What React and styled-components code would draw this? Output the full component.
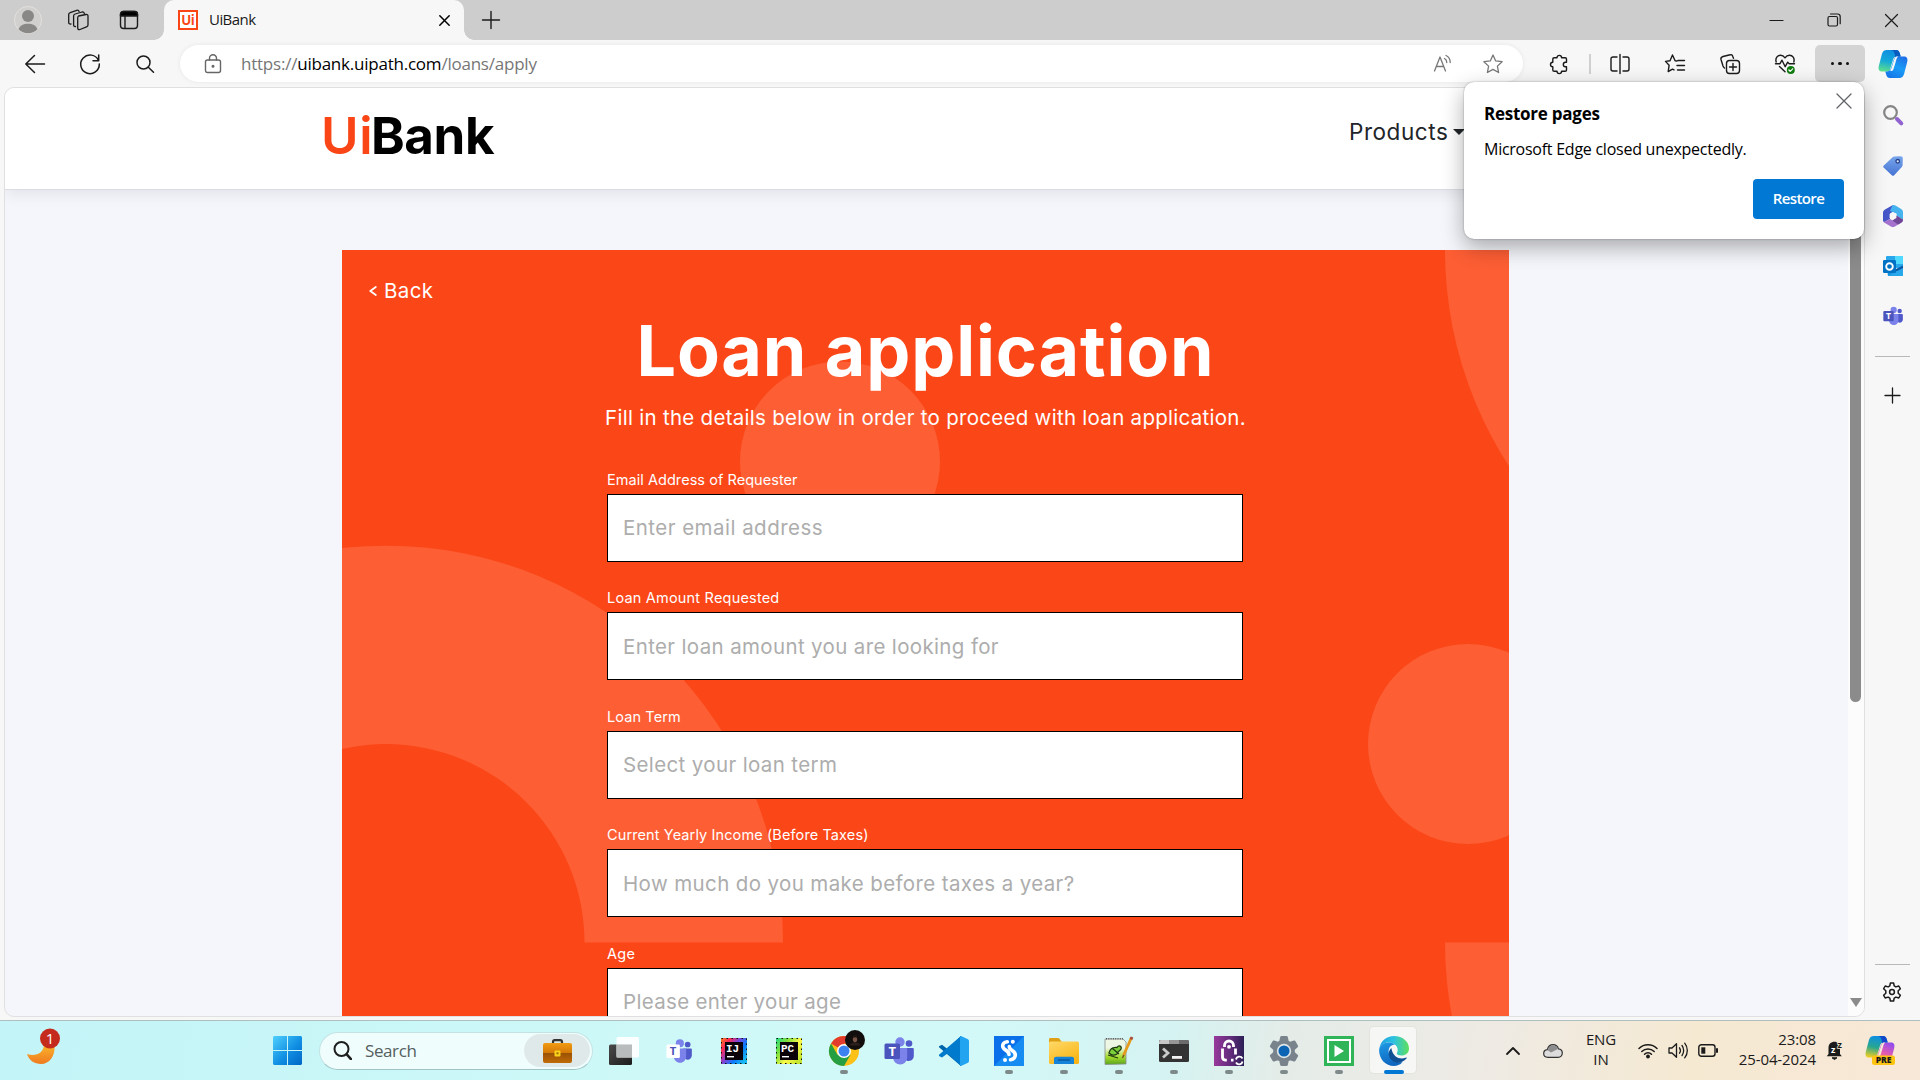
import React from 'react';
import styled, { createGlobalStyle } from 'styled-components';

const ui = '"Open Sans", "Noto Sans", sans-serif';
const brand = 'Inter, Lato, sans-serif';

const GlobalStyle = createGlobalStyle`
  *, *::before, *::after { box-sizing: border-box; }
  body { margin: 0; background: #f7f7f7; overflow: hidden; }
  button, input { font: inherit; margin: 0; }
`;

const Screen = styled.div`
  width: 1920px;
  height: 1080px;
  display: flex;
  flex-direction: column;
  font-family: ${ui};
  color: #1a1a1a;
  overflow: hidden;
`;

/* ---------- tab strip ---------- */
const TabStrip = styled.div`
  height: 40px;
  flex: none;
  display: flex;
  align-items: center;
  background: #cdcdcd;
`;
const Cell = styled.div`
  width: ${p => p.$w || 55}px;
  height: 100%;
  flex: none;
  margin-left: ${p => p.$ml || 0}px;
  display: flex;
  align-items: center;
  justify-content: center;
  svg { display: block; overflow: visible; }
`;
const Tab = styled.div`
  width: 300px;
  height: 40px;
  margin-left: 5px;
  padding: 0 7px 0 14px;
  display: flex;
  align-items: center;
  background: #f7f7f7;
  border-radius: 10px 10px 0 0;
  position: relative;
  &::before, &::after {
    content: '';
    position: absolute;
    bottom: 0;
    width: 10px;
    height: 10px;
  }
  &::before { left: -10px; background: radial-gradient(circle at 0 0, #cdcdcd 9.5px, #f7f7f7 10px); }
  &::after { right: -10px; background: radial-gradient(circle at 100% 0, #cdcdcd 9.5px, #f7f7f7 10px); }
`;
const Favicon = styled.div`
  width: 20px;
  height: 20px;
  border: 2px solid #fa4616;
  background: #fff;
  color: #fa4616;
  font: 700 13px/16px ${brand};
  text-align: center;
`;
const TabTitle = styled.span`
  flex: 1;
  margin: -2px 0 0 11px;
  font-size: 15px;
  letter-spacing: -0.55px;
`;
const Spacer = styled.div`flex: 1;`;

/* ---------- browser body ---------- */
const Body = styled.div`
  height: 980px;
  flex: none;
  display: grid;
  grid-template-columns: 1865px 55px;
  background: #f7f7f7;
  position: relative;
`;
const Main = styled.div`
  display: flex;
  flex-direction: column;
  min-width: 0;
`;
const Toolbar = styled.div`
  height: 47px;
  flex: none;
  padding: 5px 0 5px 7px;
  display: flex;
`;
const AddressBar = styled.div`
  width: 1343px;
  flex: none;
  margin-left: 8px;
  padding: 0 5px 0 8px;
  display: flex;
  align-items: center;
  border-radius: 19px;
  background: #fff;
  box-shadow: 0 0 5px rgba(0, 0, 0, 0.07);
`;
const Url = styled.div`
  flex: 1;
  margin-left: 4px;
  font-size: 17px;
  letter-spacing: -0.225px;
  color: #767676;
  white-space: nowrap;
  b { font-weight: 400; color: #000; }
`;
const Divider = styled.div`
  width: 2px;
  height: 20px;
  align-self: center;
  margin: 0 1px 0 5px;
  background: #d0d0d0;
`;
const MenuButton = styled.div`
  width: 50px;
  margin-left: 3px;
  display: flex;
  align-items: center;
  justify-content: center;
  gap: 4px;
  border-radius: 5px;
  background: #d4d4d4;
  i { width: 3.4px; height: 3.4px; border-radius: 50%; background: #111; }
`;

const Viewport = styled.div`
  height: 930px;
  flex: none;
  margin: 0 0 0 4px;
  display: flex;
  border: 1px solid #e0e0e0;
  border-radius: 10px;
  overflow: hidden;
  background: #f5f6fb;
`;
const Page = styled.div`
  width: 1843px;
  display: flex;
  flex-direction: column;
`;
const ScrollTrack = styled.div`
  width: 16px;
  padding-left: 2px;
  display: flex;
  flex-direction: column;
  align-items: flex-start;
  background: #fcfcfc;
`;
const Thumb = styled.div`
  width: 11px;
  height: 598px;
  margin-top: 16px;
  border-radius: 6px;
  background: #8b8b8b;
`;
const Arrow = styled.div`
  margin: 296px 0 0 -0.5px;
  border: 6px solid transparent;
  border-top: 9px solid #8b8b8b;
  border-bottom: 0;
`;

/* ---------- bank page ---------- */
const Header = styled.header`
  height: 102px;
  flex: none;
  display: flex;
  background: #fff;
  border-bottom: 1px solid #dcdde2;
  box-shadow: 0 5px 14px rgba(0, 0, 40, 0.07);
  z-index: 1;
`;
const Logo = styled.div`
  margin: 18px 0 0 316px;
  width: 200px;
  display: flex;
  font: 700 51px/60px ${brand};
  letter-spacing: -0.4px;
  color: #000;
`;
const LogoAccent = styled.span`
  width: 50px;
  color: #fa4616;
  font-weight: 600;
  letter-spacing: 0.8px;
`;
const NavItem = styled.div`
  margin: 28px 0 0 828px;
  display: flex;
  align-items: center;
  height: 32px;
  font: 400 22.5px/32px ${brand};
  letter-spacing: 0.55px;
  color: #212529;
  &::after {
    content: '';
    margin-left: 5px;
    border: 6px solid transparent;
    border-top-color: #212529;
    border-bottom: 0;
  }
`;
const Card = styled.section`
  width: 1167px;
  flex: 1;
  min-height: 0;
  margin: 60px 0 0 337px;
  padding: 26px 265px 0;
  background: #fb4617;
  color: #fff;
  font-family: ${brand};
  position: relative;
  overflow: hidden;
`;
const CardArt = styled.svg`
  position: absolute;
  left: 0;
  top: 0;
`;
const CardContent = styled.div`
  position: relative;
  display: flex;
  flex-direction: column;
`;
const BackLink = styled.a`
  height: 30px;
  margin-left: -238px;
  display: flex;
  align-items: center;
  gap: 7px;
  font-size: 20.5px;
  line-height: 30px;
  letter-spacing: 0.4px;
`;
const Title = styled.h1`
  margin: 3px -20px 0 -20px;
  font-size: 70px;
  line-height: 84px;
  font-weight: 700;
  letter-spacing: 0.85px;
  text-align: center;
  white-space: nowrap;
`;
const Lead = styled.p`
  margin: 10px -10px 36px;
  font-size: 20.5px;
  line-height: 30px;
  letter-spacing: 0.28px;
  text-align: center;
  white-space: nowrap;
`;
const Form = styled.form`
  width: 636px;
  display: flex;
  flex-direction: column;
  gap: 25.7px;
`;
const Field = styled.div`
  display: flex;
  flex-direction: column;
  gap: 2.8px;
`;
const Label = styled.label`
  font-size: 14.5px;
  line-height: 22px;
  letter-spacing: ${p => p.$ls}px;
`;
const Input = styled.input`
  width: 636px;
  height: 68px;
  padding: 0 15px;
  border: 1px solid #000;
  border-radius: 0;
  background: #fff;
  font: 400 20.5px/30px ${brand};
  letter-spacing: ${p => p.$ls}px;
  outline: none;
  &::placeholder { color: #adadad; opacity: 1; }
`;

/* ---------- restore popup ---------- */
const Popup = styled.div`
  position: absolute;
  left: 1464px;
  top: 42px;
  width: 400px;
  height: 157px;
  padding: 20px 20px 0;
  border-radius: 10px;
  background: #fff;
  box-shadow: 0 0 2px rgba(0, 0, 0, 0.35), 0 8px 22px rgba(0, 0, 0, 0.32);
  z-index: 3;
  color: #000;
`;
const PopupHead = styled.div`
  display: flex;
  justify-content: space-between;
  height: 24px;
  font: 700 17px/24px ${ui};
  letter-spacing: -0.25px;
  svg { margin: -9px -8px 0 0; overflow: visible; }
`;
const PopupText = styled.p`
  margin: 12px 0 19px;
  font-size: 16px;
  line-height: 22px;
  letter-spacing: -0.253px;
`;
const RestoreButton = styled.button`
  display: block;
  width: 91px;
  height: 40px;
  margin-left: auto;
  padding: 0 0 2px;
  border: 0;
  border-radius: 4px;
  background: #0078d4;
  color: #fff;
  font: 600 15px/38px ${ui};
  letter-spacing: -0.6px;
`;

/* ---------- sidebar ---------- */
const Sidebar = styled.aside`
  display: flex;
  flex-direction: column;
  align-items: center;
`;
const SideCell = styled.div`
  height: ${p => p.$h || 50}px;
  flex: none;
  display: flex;
  align-items: center;
  justify-content: center;
  svg { display: block; overflow: visible; }
`;
const SideRule = styled.div`
  width: 35px;
  height: 1px;
  flex: none;
  background: #b8b8b8;
`;

/* ---------- taskbar ---------- */
const Taskbar = styled.footer`
  height: 60px;
  flex: none;
  display: flex;
  align-items: center;
  border-top: 1px solid #aebfc0;
  background: linear-gradient(100deg, #c3f4f7 0%, #cdf8f8 30%, #d2f9f8 50%, #d5f3f2 61%, #e5ece8 67%, #eeeae4 77%, #f5e9d2 88%, #f8e8d8 100%);
`;
const Weather = styled.div`
  width: 260px;
  height: 59px;
  padding: 8px 0 0 27px;
  flex: none;
  svg { display: block; overflow: visible; }
`;
const SearchBox = styled.div`
  width: 274px;
  height: 38px;
  margin: 0 3px 0 4px;
  padding: 0 2px 0 13px;
  flex: none;
  display: flex;
  align-items: center;
  border-radius: 19px;
  background: #effdfd;
  border: 1px solid #c3e2e3;
  border-bottom-color: #9fc4c6;
  font-size: 17px;
  letter-spacing: -0.4px;
  color: #555f60;
  span { flex: 1; margin-left: 13px; }
`;
const Highlight = styled.div`
  width: 66px;
  height: 33px;
  display: flex;
  align-items: center;
  justify-content: center;
  border-radius: 17px;
  background: #dfe9e9;
`;
const App55 = styled.div`
  width: 55px;
  height: 59px;
  flex: none;
  display: flex;
  align-items: center;
  justify-content: center;
  position: relative;
  svg { display: block; overflow: visible; position: relative; }
  &::before {
    content: '';
    display: ${p => (p.$active ? 'block' : 'none')};
    position: absolute;
    left: 3px;
    top: 5px;
    width: 48px;
    height: 48px;
    border-radius: 5px;
    background: rgba(255, 255, 255, 0.6);
    border: 1px solid rgba(225, 225, 220, 0.9);
  }
  &::after {
    content: '';
    display: ${p => (p.$open ? 'block' : 'none')};
    position: absolute;
    left: ${p => (p.$active ? 17.5 : 23.5)}px;
    top: 49px;
    width: ${p => (p.$active ? 20 : 8)}px;
    height: 4px;
    border-radius: 2px;
    background: ${p => (p.$active ? '#0078d4' : '#7d8a89')};
  }
`;
const Tray = styled.div`
  flex: 1;
  height: 59px;
  margin-left: 70px;
  display: flex;
  align-items: center;
  color: #1b1b1b;
`;
const TrayText = styled.div`
  width: ${p => p.$w}px;
  flex: none;
  text-align: ${p => p.$align};
  font-size: 15px;
  line-height: 20px;
  letter-spacing: -0.1px;
  white-space: nowrap;
  margin-top: -3px;
`;

/* ---------- line icon wrapper ---------- */
const Line = ({ w = 20, h = w, c = '#1b1b1b', s = 1.4, children }) => (
  <svg width={w} height={h} viewBox={`0 0 ${w} ${h}`} fill="none" stroke={c} strokeWidth={s} strokeLinecap="round" strokeLinejoin="round">{children}</svg>
);
const GEAR = 'M8.4 1h3.2l.6 2.9 1.7 1 2.9-.9 1.6 2.8-2.2 2v2.4l2.2 2-1.6 2.8-2.9-.9-1.7 1-.6 2.9H8.4l-.6-2.9-1.7-1-2.9.9-1.6-2.8 2.2-2V8.8l-2.2-2L3.2 4l2.9.9 1.7-1z';
const STAR = 'M10 1l2.7 5.9 6.4.8-4.7 4.4 1.2 6.4L10 15.4l-5.6 3.1 1.2-6.4L.9 7.7l6.4-.8z';

const Copilot = ({ w = 30, pre }) => (
  <svg width={w} height={w} viewBox="0 0 30 30">
    <defs>
      <linearGradient id={pre ? 'pa' : 'ca'} x1="0.4" y1="0" x2="0.2" y2="1">
        <stop offset="0" stopColor="#0f8fe0" /><stop offset="0.5" stopColor={pre ? '#27a690' : '#15a9d8'} /><stop offset="1" stopColor={pre ? '#f7cf1c' : '#5fe08a'} />
      </linearGradient>
      <linearGradient id={pre ? 'pb' : 'cb'} x1="0.8" y1="0" x2="0.3" y2="1">
        <stop offset="0" stopColor={pre ? '#8f4df0' : '#1f6fe6'} /><stop offset="0.5" stopColor={pre ? '#e45bb0' : '#1a9cf7'} /><stop offset="1" stopColor={pre ? '#ff8a4c' : '#1677e8'} />
      </linearGradient>
    </defs>
    <path d="M9 0h9c2.400 0 3.300 1.400 4 4l.7 2.500H19c-2.500 0-3.300 1-4 3.300l-2.600 8.500c-.7 2.300-1.600 3.200-4 3.200H4.500C1 21.500 0 19.500.8 16l3-11.500C4.700 1.300 6 0 9 0z" fill={`url(#${pre ? 'pa' : 'ca'})`} />
    <path d="M21 28h-9c-2.400 0-3.300-1.400-4-4l-.7-2.500h1.100c2.600 0 3.900-1.200 4.700-3.800L15.700 9.800c.6-2 1.300-3.300 3.800-3.300h6c3.500 0 4.500 2 3.700 5.500l-3 11.500C25.300 26.700 24 28 21 28z" fill={`url(#${pre ? 'pb' : 'cb'})`} />
    <path d="M13 0h5c2.400 0 3.300 1.400 4 4l.7 2.500H19l-1.800.4C16.800 3 16 .5 13 0z" fill={pre ? '#1147c8' : '#0b5ac0'} />
    <path d="M12 20.500c.8-.7 1.300-1.700 1.700-3L16.200 9.600c.5-1.600 1.100-2.500 2.300-3h1.800c-1 .6-1.500 1.500-1.900 2.900l-2.700 8.900c-.4 1.400-1 2.100-2 2.600z" fill={pre ? '#f7ead8' : '#f7f7f7'} />
    {pre && <rect x="7" y="19.500" width="23" height="9.500" rx="2.500" fill="#fdc512" />}
    {pre && <text x="18.600" y="27.300" textAnchor="middle" fontFamily="Open Sans, sans-serif" fontWeight="800" fontSize="8.500" fill="#1b1b1b">PRE</text>}
  </svg>
);

const Teams = ({ w = 30, light }) => (
  <svg width={w} height={w} viewBox="0 0 30 30">
    <circle cx="16" cy="6" r="4.700" fill="#7b83eb" />
    <circle cx="25" cy="7.500" r="3.300" fill="#5059c9" />
    <path d="M20 12h8.500c.8 0 1.300.5 1.300 1.300v6.500c0 3.200-2.300 5.200-5 5.200s-4.800-2-4.800-5z" fill="#5059c9" />
    <path d="M9 12h13c.7 0 1.200.5 1.200 1.200V21c0 4.500-3.200 7.500-7 7.500S9 25.500 9 21z" fill="#7b83eb" />
    <rect x="0.500" y="7.500" width="15.500" height="15.500" rx="1.500" fill={light ? '#fff' : '#4b53bc'} />
    <text x="8.200" y="19.800" textAnchor="middle" fontFamily="Open Sans, sans-serif" fontWeight="700" fontSize="13" fill={light ? '#4b53bc' : '#fff'}>T</text>
  </svg>
);

const JetBrains = ({ id, letters, stops }) => (
  <svg width="26" height="26" viewBox="0 0 26 26">
    <defs>
      <linearGradient id={id} x1="0" y1="0" x2="1" y2="0.700">
        {stops.map((c, i) => <stop key={c} offset={i / (stops.length - 1)} stopColor={c} />)}
      </linearGradient>
    </defs>
    <rect width="26" height="26" fill={`url(#${id})`} />
    <rect x="0.500" y="0.500" width="25" height="25" fill="none" stroke="#111" strokeDasharray="1.500 3.500" />
    <rect x="4" y="4" width="18" height="18" fill="#0a0208" />
    <text x="5" y="13.500" fontFamily="Liberation Mono, monospace" fontWeight="700" fontSize="11" fill="#fff">{letters}</text>
    <rect x="6" y="18" width="7" height="1.400" fill="#fff" />
  </svg>
);

const fields = [
  ['Email Address of Requester', 0.05, 'Enter email address', 0.47],
  ['Loan Amount Requested', 0.2, 'Enter loan amount you are looking for', 0.355],
  ['Loan Term', 0.1, 'Select your loan term', 0.37],
  ['Current Yearly Income (Before Taxes)', 0.11, 'How much do you make before taxes a year?', 0.38],
  ['Age', 0.3, 'Please enter your age', 0.33],
];

function Tabs() {
  return (
    <TabStrip>
      <Cell $w={56}>
        <svg width="28" height="28" viewBox="0 0 28 28">
          <circle cx="14" cy="14" r="13.500" fill="#d2d0ce" stroke="#e2e0dd" />
          <circle cx="14" cy="10" r="6" fill="#8a8886" />
          <path d="M4.500 23.300C6 19.500 9.500 17.800 14 17.800s8 1.700 9.500 5.500C21 26 17.500 27.300 14 27.300S7 26 4.500 23.300z" fill="#8a8886" />
        </svg>
      </Cell>
      <Cell $w={43}>
        <Line w={22} s={1.3}>
          <path d="M11.500 7l7.500-1.500c1.200-.2 2 .4 2 1.500v9c0 1-.5 1.600-1.500 1.900L13 20.500c-1.300.5-2.300-.3-2.300-1.600V9c0-1.100.2-1.700.8-2z" />
          <path d="M8.500 17.500c-1.200.2-1.900-.4-1.900-1.500V7c0-1.100.5-1.700 1.500-2l7-2c1.200-.3 2 .4 2.200 1.500" />
          <path d="M4 15c-1.300.3-2.300-.3-2.300-1.600V5.600c0-1.100.5-1.700 1.500-2l6.500-2.300c1.200-.4 2 .1 2.400 1.200" />
        </Line>
      </Cell>
      <Cell $w={60}>
        <Line w={20}><rect x="1.500" y="1.500" width="17" height="17" rx="3" /><path d="M1.500 6V4.500a3 3 0 0 1 3-3h11a3 3 0 0 1 3 3V6z" fill="#000" /><path d="M6 6v12" /></Line>
      </Cell>
      <Tab>
        <Favicon>Ui</Favicon>
        <TabTitle>UiBank</TabTitle>
        <Cell $w={26}><Line w={11} s={1.5} c="#000"><path d="M.8.8l9.400 9.400M10.200.8L.8 10.200" /></Line></Cell>
      </Tab>
      <Cell $w={54}><Line w={18} s={1.4}><path d="M9 .5v17M.5 9h17" /></Line></Cell>
      <Spacer />
      <Cell $w={57}><Line w={13} s={1.2}><path d="M0 6.500h13" /></Line></Cell>
      <Cell $w={57}><Line w={14} s={1.2}><rect x="1" y="3.500" width="9.500" height="9.500" rx="1.500" /><path d="M3.500 1h7c1.700 0 2.700 1 2.700 2.700v7" /></Line></Cell>
      <Cell $w={58}><Line w={13} s={1.2}><path d="M.5.5l12 12M12.500.5l-12 12" /></Line></Cell>
    </TabStrip>
  );
}

function Navigation() {
  return (
    <Toolbar>
      <Cell><Line w={20} s={1.500}><path d="M19.500 10H.8M9.500 1.500L.8 10l8.700 8.500" /></Line></Cell>
      <Cell><Line w={20} s={1.500}><path d="M18.500 6.500A9.300 9.300 0 1 0 19.300 10M18.700 1v5.700H13" /></Line></Cell>
      <Cell><Line w={18} s={1.500}><circle cx="7.500" cy="7.500" r="6.500" /><path d="M12.300 12.300l5.200 5" /></Line></Cell>
      <AddressBar>
        <Cell $w={49}><Line w={18} h={20} c="#666" s={1.400}><rect x="1.500" y="6" width="15" height="12.500" rx="2" /><path d="M5.500 6V4.300a3.500 3.500 0 0 1 7 0V6" /><circle cx="9" cy="12.300" r="0.800" fill="#666" /></Line></Cell>
        <Url>https://<b>uibank.uipath.com</b>/loans/apply</Url>
        <Cell $w={50}><Line w={20} c="#777" s={1.300}><path d="M1.500 17L7 3l5.500 14M3.500 12.500h7M11.500 4.500c1.500.8 2.300 2.200 2.300 4M13 1.500c2.700 1.200 4.200 3.800 4.200 7" /></Line></Cell>
        <Cell $w={50}><Line w={20} c="#777" s={1.300}><path d={STAR} /></Line></Cell>
      </AddressBar>
      <Cell $w={50} $ml={11}>
        <Line w={20}><path d="M8 3.700a2.300 2.300 0 0 1 4.600 0h3.500c1 0 1.400.5 1.400 1.400v3.200h-1a2.200 2.200 0 0 0 0 4.400h1v3.200c0 .9-.5 1.400-1.400 1.400h-3.500a2.300 2.300 0 0 1-4.600 0H5.200c-.9 0-1.400-.5-1.400-1.400v-3.100a2.300 2.300 0 0 1 0-4.600V5.100c0-.9.500-1.400 1.400-1.400z" /></Line>
      </Cell>
      <Divider />
      <Cell><Line w={20}><path d="M7 3H3C1.700 3 1 3.700 1 5v10c0 1.300.7 2 2 2h4M13 3h4c1.300 0 2 .7 2 2v10c0 1.300-.7 2-2 2h-4M10 .5v19" /></Line></Cell>
      <Cell><Line w={20}><path d="M12 7l-1.900-.3L7.500 1 5 6.700l-4.500.7 3.600 3.900-.9 6.300 4.300-2.500 1.500.8M13 6.500h6.500M12 11.500h7.500M12.500 16h7" /></Line></Cell>
      <Cell><Line w={20}><rect x="6.500" y="6.500" width="13" height="13" rx="3" /><path d="M13 9.500v7M9.500 13h7M13.500 4.300l-.8-2C12.300 1 11.500.4 10.200.8L3 2.500C1.500 3 .6 4 1 5.500l2 6.500c.3.800.8 1.500 1.500 2" /></Line></Cell>
      <Cell>
        <Line w={20}><path d="M1.200 8C0 4 2.500 1.200 5.500 1.200c2 0 3.400 1 4.500 2.600 1.100-1.600 2.500-2.600 4.500-2.600C17.500 1.200 20 4 18.800 8M.5 9.700H5l2-3.500 3.200 6.500 2.500-4.500 1.500 1.500h5.300M4.500 12.500l5.500 5.300" /><circle cx="15.800" cy="16" r="4" fill="#107c10" stroke="none" /><path d="M13.900 16l1.300 1.400 2.500-2.600" stroke="#fff" strokeWidth="1.200" /></Line>
      </Cell>
      <MenuButton><i /><i /><i /></MenuButton>
    </Toolbar>
  );
}

function BankPage() {
  return (
    <Page>
      <Header>
        <Logo><LogoAccent>Ui</LogoAccent>Bank</Logo>
        <NavItem>Products</NavItem>
      </Header>
      <Card>
        <CardArt width="1167" height="770" fill="#fd5e34">
          <circle cx="498" cy="211.500" r="100" />
          <circle cx="1126" cy="494" r="100" />
          <path d="M-353 692.500a397 397 0 0 1 794 0H242.500a198.500 198.500 0 0 0-397 0z" />
          <path d="M1103 0a397 397 0 0 0 794 0z" />
          <path d="M1103 692.500a397 397 0 0 0 794 0z" />
        </CardArt>
        <CardContent>
          <BackLink>
            <Line w={8} h={10} c="#fff" s={1.800}><path d="M6.800 1L1.300 5l5.500 4" /></Line>
            Back
          </BackLink>
          <Title>Loan application</Title>
          <Lead>Fill in the details below in order to proceed with loan application.</Lead>
          <Form>
            {fields.map(([label, ls, placeholder, pls]) => (
              <Field key={label}>
                <Label $ls={ls}>{label}</Label>
                <Input placeholder={placeholder} $ls={pls} readOnly />
              </Field>
            ))}
          </Form>
        </CardContent>
      </Card>
    </Page>
  );
}

function SideIcons() {
  return (
    <Sidebar>
      <SideCell $h={49}><Copilot w={30} /></SideCell>
      <SideCell $h={52}>
        <svg width="20" height="20" viewBox="0 0 20 20" fill="none"><circle cx="7.500" cy="7.500" r="6.300" stroke="#858585" strokeWidth="2.200" /><path d="M14 14l4.300 4.300" stroke="#9263d0" strokeWidth="4" strokeLinecap="round" /></svg>
      </SideCell>
      <SideCell>
        <svg width="20" height="20" viewBox="0 0 20 20"><defs><linearGradient id="tag" x1="0.500" y1="0" x2="0.500" y2="1"><stop offset="0" stopColor="#78a6ec" /><stop offset="1" stopColor="#4673d2" /></linearGradient></defs><path d="M11.500.5l6-.2c1.500 0 2.300.8 2.300 2.300l-.2 6.400c0 .8-.3 1.300-.8 1.900l-7.600 8.300c-.8.800-1.600.8-2.400 0L.8 11.800C0 11 0 10.200.8 9.400l8.500-8c.6-.6 1.300-.9 2.200-.9z" fill="url(#tag)" /><circle cx="14.700" cy="5.300" r="1.800" fill="#d7e6fb" stroke="#27408b" strokeWidth="1.300" /></svg>
      </SideCell>
      <SideCell>
        <svg width="20" height="22" viewBox="0 0 20 22"><path d="M9.500.3L2 4.500C.7 5.300 0 6.300 0 8v7c0 1 .3 1.800.8 2.300L7 14V8.500l5-3V1.500z" fill="#4456c8" /><path d="M9.500.3c1-.5 2-.3 3 .3l5.700 3.500C19.400 5 20 6 20 7.500v7l-6.500-3.700V8.500L7 6z" fill="#45b4ee" /><path d="M20 14.500c0 1.500-.6 2.500-1.800 3.200l-6.300 3.700c-1.300.8-2.600.8-4 0l-6-3.500c-.5-.3-.9-.6-1.100-1L7 14l3 1.500 3.500-2z" fill="#a471cf" /><path d="M13.500 10.500L20 14.500c0 1.500-.6 2.500-1.800 3.200l-3.200 1.900L9.500 15.500z" fill="#6f4796" /><path d="M10 7.200l3.400 2v3.900L10 15l-3.400-1.900V9.200z" fill="#f7f7f7" /></svg>
      </SideCell>
      <SideCell>
        <svg width="20" height="20" viewBox="0 0 20 20"><rect x="3" width="17" height="12" rx="1" fill="#28a8ea" /><rect x="12" width="8" height="8" fill="#50d9ff" /><path d="M5 10l15 10H6c-.8 0-1.300-.5-1.300-1.300z" fill="#1490df" /><path d="M20 9.500v10.200L11 14z" fill="#0a5aa8" /><path d="M5 19.800L20 12v8z" fill="#28a8ea" /><rect y="4" width="13" height="13" rx="1.300" fill="#0072c6" /><circle cx="6.500" cy="10.500" r="3.300" fill="none" stroke="#fff" strokeWidth="1.900" /></svg>
      </SideCell>
      <SideCell><Teams w={20} /></SideCell>
      <SideCell $h={15} />
      <SideRule />
      <SideCell $h={77}><Line w={15} s={1.300}><path d="M7.500 0v15M0 7.500h15" /></Line></SideCell>
      <Spacer />
      <SideRule />
      <SideCell $h={55}><Line w={21} s={1.500}><path d={GEAR} /><circle cx="10" cy="10" r="2.400" /></Line></SideCell>
    </Sidebar>
  );
}

function WindowsTaskbar() {
  return (
    <Taskbar>
      <Weather>
        <svg width="34" height="36" viewBox="0 0 34 36">
          <defs><linearGradient id="moon" x1="0" y1="0" x2="0" y2="1"><stop offset="0" stopColor="#fbb72c" /><stop offset="1" stopColor="#ee7a20" /></linearGradient></defs>
          <path d="M27.500 17c.8 10-5 18-13.500 18C7.500 35 2 31.500 0 25c8 3 17-.5 17-10z" fill="url(#moon)" />
          <circle cx="23" cy="9.500" r="10" fill="#c42b1c" />
          <text x="23" y="15" textAnchor="middle" fontFamily="Open Sans, sans-serif" fontSize="15" fill="#fff">1</text>
        </svg>
      </Weather>
      <App55>
        <svg width="29" height="29" viewBox="0 0 29 29"><defs><linearGradient id="win" x1="0" y1="0" x2="1" y2="1"><stop offset="0" stopColor="#4fd0fd" /><stop offset="0.550" stopColor="#118fe3" /><stop offset="1" stopColor="#0067c6" /></linearGradient></defs><path d="M1 0h13v14H0V1zM15 0h13l1 1v13H15zM0 15h14v14H1l-1-1zM15 15h14v13l-1 1H15z" fill="url(#win)" /></svg>
      </App55>
      <SearchBox>
        <Line w={19} s={2} c="#1f1f1f"><circle cx="8.500" cy="8" r="7" /><path d="M13.500 13.200l4.500 5" strokeWidth="2.500" /></Line>
        <span>Search</span>
        <Highlight>
          <svg width="29" height="24" viewBox="0 0 29 24"><defs><linearGradient id="case" x1="0" y1="0" x2="0" y2="1"><stop offset="0" stopColor="#f29a12" /><stop offset="0.500" stopColor="#d47a08" /><stop offset="0.520" stopColor="#9a5204" /><stop offset="1" stopColor="#c06c08" /></linearGradient></defs><path d="M10 5V3c0-1.200.6-1.800 1.800-1.800h5.400c1.200 0 1.800.6 1.800 1.800v2" fill="none" stroke="#333" strokeWidth="2.200" /><rect y="4" width="29" height="20" rx="2" fill="url(#case)" /><rect x="11.500" y="11.500" width="6" height="6" rx="1" fill="#f9d21c" /><rect x="13.500" y="13.300" width="2" height="2" fill="#a66a00" /></svg>
        </Highlight>
      </SearchBox>
      <App55>
        <svg width="30" height="28" viewBox="0 0 30 28"><defs><linearGradient id="tv" x1="0" y1="0" x2="1" y2="1"><stop offset="0" stopColor="#4a4a4a" /><stop offset="1" stopColor="#1c1c1c" /></linearGradient></defs><rect y="7.500" width="23" height="20.500" rx="1.500" fill="url(#tv)" /><rect x="7.500" width="22.500" height="20.500" rx="1.500" fill="#fff" opacity="0.930" /><rect x="7.500" y="7.500" width="15.500" height="13" fill="#b9bcbc" /></svg>
      </App55>
      <App55><Teams w={26} light /></App55>
      <App55><JetBrains id="ij" letters="IJ" stops={['#fc801d', '#fe2857', '#7b45d8', '#087cfa', '#19b5f0']} /></App55>
      <App55><JetBrains id="pc" letters="PC" stops={['#21d789', '#7fe03c', '#fcf84a', '#c3e52f']} /></App55>
      <App55 $open>
        <svg width="30" height="30" viewBox="0 0 30 30">
          <circle cx="15" cy="15" r="15" fill="#fbc116" />
          <path d="M15 15L2 7.500A15 15 0 0 1 28 7.500H15z" fill="#e33b2e" />
          <path d="M15 15L8.500 18.750 2 7.500A15 15 0 0 0 15 30l6.500-11.250z" fill="#269f43" />
          <circle cx="15" cy="15" r="7" fill="#fff" /><circle cx="15" cy="15" r="5.500" fill="#3b82f0" />
          <circle cx="26" cy="4" r="10" fill="#120e0d" /><path d="M20.500 9.500c1-2.500 3-3 5.500-3s4.500.5 5.500 3" fill="#2d201c" /><ellipse cx="26" cy="3" rx="2.200" ry="3.200" fill="#7a5446" /><path d="M23.300 2.500c-.3-3.500 5.700-3.500 5.400 0-1.400-1.700-4-1.700-5.400 0z" fill="#0b0808" />
        </svg>
      </App55>
      <App55><Teams w={30} /></App55>
      <App55>
        <svg width="30" height="30" viewBox="0 0 30 30"><path d="M22 0L8.500 13 3 8.700 0 10.300v1L22 30z" fill="#0065a9" /><path d="M22 30L8.500 17.500 3 21.500 0 20v-1.300L22 0z" fill="#007acc" /><path d="M22 0l6.500 3c1 .5 1.500 1.200 1.500 2.300v19.400c0 1.100-.5 1.800-1.500 2.300L22 30l-1-1.200V1.200z" fill="#22a4f1" /></svg>
      </App55>
      <App55 $open>
        <svg width="30" height="30" viewBox="0 0 30 30"><rect width="30" height="30" fill="#0a6fe8" /><path d="M30 0v30H0z" fill="#168cf3" /><path d="M13.300 5.800c-3 .5-4.600 2-4.600 4.200 0 4.500 6.300 3.800 6.300 8.500M15.300 10.500c0 4.500 6 3.500 6 8.500 0 2.600-1.600 4.200-4.800 4.700" fill="none" stroke="#fff" strokeWidth="3.600" strokeLinecap="round" /><circle cx="18.800" cy="5.800" r="2" fill="#fff" /><circle cx="11" cy="24" r="2" fill="#fff" /></svg>
      </App55>
      <App55 $open>
        <svg width="30" height="26" viewBox="0 0 30 26"><defs><linearGradient id="folder" x1="0" y1="0" x2="0.600" y2="1"><stop offset="0" stopColor="#ffd969" /><stop offset="1" stopColor="#f9b616" /></linearGradient></defs><path d="M0 1.500C0 .5.500 0 1.500 0h7c1 0 1.500.2 2.100.9L13 4v4H0z" fill="#dfa015" /><rect y="3.500" width="30" height="22.500" rx="1.500" fill="url(#folder)" /><path d="M5 26v-5c0-1.500.8-2.300 2.300-2.300h15.400c1.500 0 2.300.8 2.300 2.300v5z" fill="#1583d8" /><path d="M9 22h12" stroke="#0a4f92" strokeWidth="1.200" /></svg>
      </App55>
      <App55 $open>
        <svg width="29" height="28" viewBox="0 0 29 28"><defs><linearGradient id="npp" x1="0" y1="0" x2="0" y2="1"><stop offset="0.350" stopColor="#eef6e4" /><stop offset="0.700" stopColor="#a5dc2c" /><stop offset="1" stopColor="#5aa51c" /></linearGradient></defs><path d="M1 2h18l3 3v22L1 27.500z" fill="url(#npp)" stroke="#8a9090" strokeWidth="0.800" /><path d="M2 1.800h17" stroke="#555" strokeWidth="1.600" strokeDasharray="1 1.300" /><path d="M5 16c1-4 4-6 8-5.500 2-3 5-1 4 1.500-1 2-3 2-4 5-3 2-6 1-8-1zM4 18l10 3M8 11l7 6" fill="#7bcf3a" stroke="#1e3a12" strokeWidth="1.300" /><path d="M27.500.5l-8 18" stroke="#e59a1a" strokeWidth="2.800" /><path d="M28 0l-1 2.500" stroke="#a94b3a" strokeWidth="2.800" /><path d="M19.800 18l-1.300 3" stroke="#7b5325" strokeWidth="1.500" /></svg>
      </App55>
      <App55 $open>
        <svg width="30" height="22" viewBox="0 0 30 22"><rect width="30" height="22" rx="1.500" fill="#333" /><path d="M1.500 0H10v4H0V1.500z" fill="#c9c9c9" /><rect x="10" width="10" height="4" fill="#969696" /><path d="M20 0h8.500L30 1.500V4H20z" fill="#6b6b6b" /><path d="M4 8.500l5 4.500-5 4.500" fill="none" stroke="#c9c9c9" strokeWidth="2.800" /><rect x="13" y="16" width="10" height="2.800" fill="#f2f2f2" /></svg>
      </App55>
      <App55 $open>
        <svg width="30" height="30" viewBox="0 0 30 30"><defs><linearGradient id="pur" x1="0" y1="0" x2="1" y2="0"><stop offset="0" stopColor="#98389c" /><stop offset="0.600" stopColor="#5d2a78" /><stop offset="1" stopColor="#2b1f55" /></linearGradient></defs><rect width="30" height="30" fill="url(#pur)" /><path d="M10.500 11V9.500a4.500 4.500 0 0 1 9 0V11M8.500 12.500V21c0 2 .8 2.900 2.800 3.200h1.500M21.500 12.500v6M17 24.200h2.500" fill="none" stroke="#fff" strokeWidth="2.800" /><circle cx="15" cy="10.800" r="1.900" fill="#fff" /><path d="M22 23.500a3.500 3.500 0 0 1 6.500-1M28.500 25.500a3.500 3.500 0 0 1-6.500 1" fill="none" stroke="#fff" strokeWidth="1.800" /></svg>
      </App55>
      <App55 $open>
        <svg width="30" height="30" viewBox="0 0 20 20"><path d={GEAR} fill="#78838c" stroke="#78838c" strokeWidth="2" strokeLinejoin="round" /><circle cx="10" cy="10" r="4.800" fill="#dfe6ea" /><circle cx="10" cy="10" r="3.700" fill="#0b64b4" /></svg>
      </App55>
      <App55 $open>
        <svg width="30" height="30" viewBox="0 0 30 30"><rect width="30" height="30" fill="#2fb457" /><rect x="4" y="4" width="22" height="22" fill="none" stroke="#fff" strokeWidth="2" /><path d="M10.500 9l9.500 6-9.500 6z" fill="#fff" /></svg>
      </App55>
      <App55 $open $active>
        <svg width="30" height="30" viewBox="0 0 30 30"><defs><linearGradient id="ea" x1="0" y1="0.300" x2="1" y2="0.300"><stop offset="0" stopColor="#1b9de2" /><stop offset="0.500" stopColor="#2fc3df" /><stop offset="1" stopColor="#5fe05a" /></linearGradient><linearGradient id="eb" x1="0" y1="0" x2="0.300" y2="1"><stop offset="0" stopColor="#1e9be6" /><stop offset="1" stopColor="#1067c0" /></linearGradient></defs><path d="M.2 13C1.500 5 7.500 0 15 0c8.500 0 15 5.500 15 12.500 0 4.500-3.500 7-7.500 7-3 0-4.700-1-4.700-2 0-.8.900-1.300.9-3.500C18.700 9 14 6.500 9.500 6.500 5 6.500 1.500 9 .2 13z" fill="url(#ea)" /><path d="M.1 14C.5 9.500 4.500 6.500 9.500 6.500c2 0 4.500.6 6.300 2-6 .5-7.300 6-5.300 10.500 2 4.800 7 8 13 7.200C21 28.800 18 30 15 30 6.500 30 0 23 .1 14z" fill="url(#eb)" /><path d="M12.300 12c-3.800 3.500-3 9 .5 12.300 4 3.700 10.700 3 14.700-1.800.5-.6 0-1.200-.8-.8-4.700 2-12.500.8-14.400-9.700z" fill="#0f4f94" /></svg>
      </App55>
      <Tray>
        <Cell $w={43}><Line w={14} h={8} s={1.800}><path d="M1 7l6-6 6 6" /></Line></Cell>
        <Cell $w={38}>
          <svg width="20" height="14" viewBox="0 0 20 14"><path d="M4.800 13.300C2.300 13.300.7 11.800.7 9.500c0-2 1.400-3.600 3.600-3.800C5.200 2.500 7.300.7 10 .7c2.600 0 4.700 1.500 5.400 4.100 2.400.2 3.900 1.900 3.900 4.200 0 2.500-1.700 4.300-4.200 4.300z" fill="#dcdcdc" stroke="#333" strokeWidth="1.200" /><path d="M4.500 6C5.500 3 7.500 1.300 10 1.300c2.300 0 4.300 1.400 4.900 3.700L8 8.500z" fill="#8d8d8d" /></svg>
        </Cell>
        <TrayText $w={58} $align="center">ENG<br />IN</TrayText>
        <Cell $w={36}><Line w={20} h={15} s={1.500}><path d="M1 5.500a12.800 12.800 0 0 1 18 0M3.800 8.500a8.800 8.800 0 0 1 12.400 0M6.500 11.300a5 5 0 0 1 7 0" /><circle cx="10" cy="13.500" r="1.200" fill="#1b1b1b" /></Line></Cell>
        <Cell $w={24}><Line w={20} h={17} s={1.300}><path d="M1 6h3l4.500-4.300v13.600L4 11H1zM11.500 5.800c1 1.500 1 4 0 5.400M14 3.500c2.200 2.800 2.200 7.200 0 10M16.700 1.200c3.500 4.300 3.500 10.300 0 14.600" /></Line></Cell>
        <Cell $w={36}><Line w={20} h={13} s={1.400}><rect x="0.800" y="0.800" width="16.200" height="11.400" rx="2.500" /><rect x="3.300" y="3.300" width="4" height="6.400" fill="#1b1b1b" stroke="none" /><path d="M19 5v3" strokeWidth="2" /></Line></Cell>
        <TrayText $w={90} $align="right">23:08<br />25-04-2024</TrayText>
        <Cell $w={38}>
          <svg width="18" height="19" viewBox="0 0 18 19"><path d="M2.500 13V7C2.500 3 5 .8 8.500.8c3 0 5.500 2.500 5.500 6V13l1.800 2.300H.8z" fill="#1b1b1b" /><path d="M6 16.800h5L8.500 18.500z" fill="#1b1b1b" stroke="#1b1b1b" /><text x="5" y="12" fontFamily="Open Sans, sans-serif" fontWeight="700" fontSize="9" fill="#fff">z</text><text x="11.500" y="6.500" fontFamily="Open Sans, sans-serif" fontWeight="700" fontSize="9" fill="#1b1b1b" stroke="#f7e9d0" strokeWidth="1.500" paintOrder="stroke">z</text></svg>
        </Cell>
        <Cell $w={51}><Copilot w={30} pre /></Cell>
      </Tray>
    </Taskbar>
  );
}

export default function App() {
  return (
    <Screen>
      <GlobalStyle />
      <Tabs />
      <Body>
        <Main>
          <Navigation />
          <Viewport>
            <BankPage />
            <ScrollTrack><Thumb /><Arrow /></ScrollTrack>
          </Viewport>
        </Main>
        <SideIcons />
        <Popup>
          <PopupHead>
            Restore pages
            <Line w={16} s={1.300} c="#5f6368"><path d="M1 1l14 14M15 1L1 15" /></Line>
          </PopupHead>
          <PopupText>Microsoft Edge closed unexpectedly.</PopupText>
          <RestoreButton>Restore</RestoreButton>
        </Popup>
      </Body>
      <WindowsTaskbar />
    </Screen>
  );
}
